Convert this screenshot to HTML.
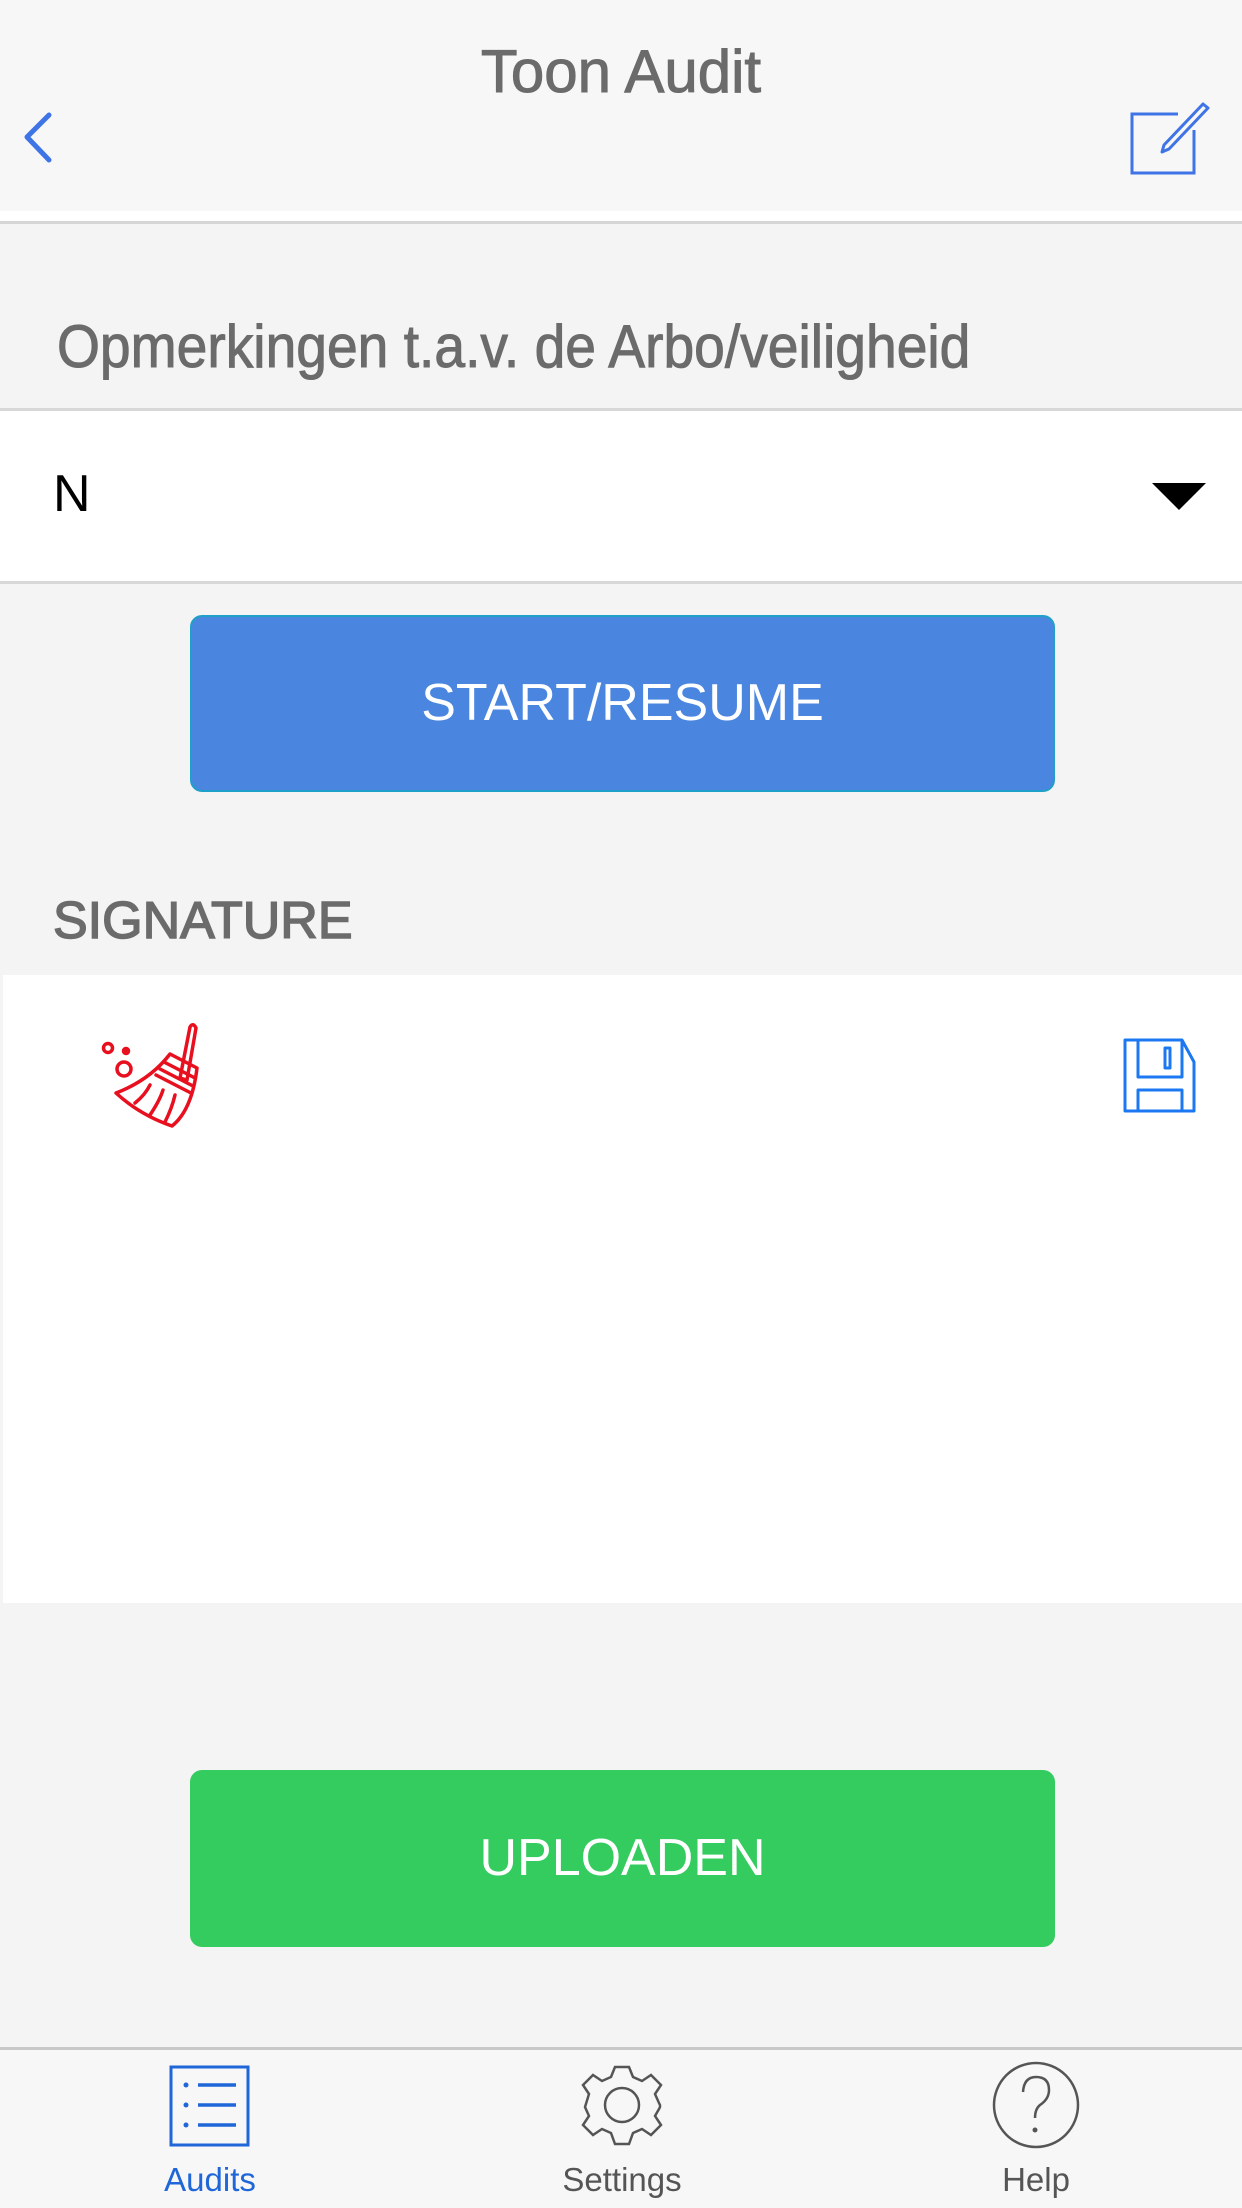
<!DOCTYPE html>
<html><head><meta charset="utf-8"><style>
*{margin:0;padding:0;box-sizing:border-box}
body{width:1242px;height:2208px;background:#f4f4f4;font-family:"Liberation Sans",sans-serif;position:relative;overflow:hidden}
.a{position:absolute}
</style></head><body>
<div class="a" style="left:0;top:0;width:1242px;height:211px;background:#f7f7f7"></div>
<div class="a" style="left:0;top:211px;width:1242px;height:10px;background:#fff"></div>
<div class="a" style="left:0;top:221px;width:1242px;height:3px;background:#d6d6d6"></div>
<div class="a" style="left:0;top:40px;width:1242px;text-align:center;font-size:60px;color:#6b6b6b;line-height:64px;-webkit-text-stroke:1px #6b6b6b">Toon Audit</div>
<svg class="a" style="left:0;top:0" width="1242" height="211">
<polyline points="49,115 27,137 49,160" fill="none" stroke="#3f74e6" stroke-width="5" stroke-linecap="round" stroke-linejoin="round"/>
<polyline points="1178,114 1132,114 1132,173 1194,173 1194,130" fill="none" stroke="#3f74e6" stroke-width="3"/>
<path d="M1203,104 L1164,145 L1162,152 L1169,149 L1208,108 Z" fill="none" stroke="#3f74e6" stroke-width="3" stroke-linejoin="round"/>
</svg>
<div class="a" style="left:57px;top:314px;font-size:60px;color:#6b6b6b;line-height:66px;transform:scaleX(0.92);transform-origin:0 0;white-space:nowrap;-webkit-text-stroke:1px #6b6b6b">Opmerkingen t.a.v. de Arbo/veiligheid</div>
<div class="a" style="left:0;top:408px;width:1242px;height:3px;background:#d8d8d8"></div>
<div class="a" style="left:0;top:411px;width:1242px;height:171px;background:#fff"></div>
<div class="a" style="left:0;top:581px;width:1242px;height:3px;background:#d8d8d8"></div>
<div class="a" style="left:53px;top:464px;font-size:52px;color:#000;line-height:60px">N</div>
<svg class="a" style="left:1150px;top:480px" width="60" height="32"><polygon points="2,3 56,3 29,30" fill="#000"/></svg>
<div class="a" style="left:190px;top:615px;width:865px;height:177px;background:#4a86e0;border:2px solid #1ea0c8;border-radius:12px;color:#fff;font-size:52px;text-align:center;line-height:173px">START/RESUME</div>
<div class="a" style="left:53px;top:891px;font-size:52px;color:#6b6b6b;line-height:60px;-webkit-text-stroke:1.5px #6b6b6b">SIGNATURE</div>
<div class="a" style="left:3px;top:975px;width:1239px;height:628px;background:#fff"></div>
<svg class="a" style="left:0;top:1000px" width="1242" height="140" fill="none">
<g stroke="#e8101e" stroke-width="3.5" stroke-linecap="round" stroke-linejoin="round">
<circle cx="108" cy="48" r="4.5"/><circle cx="126" cy="51" r="2.5" fill="#e8101e"/><circle cx="124" cy="69" r="7"/>
<path d="M196,28 L187,80 L180,78 L190,27 Q193,22 196,28 Z"/>
<path d="M170,54 L197,68 Q192,110 172,126 Q140,115 116,93 Q150,80 170,54 Z"/>
<path d="M164,62 L195,78 M160,69 L193,86 M156,75 L191,93"/>
<path d="M135,103 Q145,95 150,85 M150,115 Q160,100 163,90 M165,122 Q172,108 175,95"/>
</g>
<g stroke="#1b78f2" stroke-width="3" stroke-linejoin="round">
<path d="M1125,40 L1182,40 L1194,62 L1194,111 L1125,111 Z"/>
<path d="M1138,40 L1138,77 L1182,77 L1182,40"/>
<rect x="1165" y="48" width="5" height="20"/>
<path d="M1138,111 L1138,90 L1182,90 L1182,111"/>
</g>
</svg>
<div class="a" style="left:190px;top:1770px;width:865px;height:177px;background:#34cc5f;border-radius:12px;color:#fff;font-size:52px;text-align:center;line-height:177px">UPLOADEN</div>
<div class="a" style="left:0;top:2047px;width:1242px;height:3px;background:#c8c8c8"></div>
<div class="a" style="left:0;top:2050px;width:1242px;height:158px;background:#f7f7f7"></div>
<svg class="a" style="left:0;top:2050px" width="1242" height="158" fill="none">
<g stroke="#1f66d8" stroke-width="3">
<rect x="171" y="17" width="77" height="78"/>
<path d="M198,35 H236 M198,55 H236 M198,75 H236" stroke-width="3.5"/>
</g>
<g fill="#1f66d8"><circle cx="186" cy="35" r="2.5"/><circle cx="186" cy="55" r="2.5"/><circle cx="186" cy="75" r="2.5"/></g>
<g stroke="#555" stroke-width="2.5">
<path d="M615,17 L629,17 L633,27 L642,31 L651,25 L661,35 L655,44 L659,53 L660,55 L660,57 L659,59 L655,66 L661,75 L651,85 L642,79 L633,83 L629,94 L615,94 L611,83 L602,79 L593,85 L583,75 L589,66 L585,57 L589,44 L583,35 L593,25 L602,31 L611,27 Z"/>
<circle cx="622" cy="55" r="17"/>
<circle cx="1036" cy="55" r="42"/>
<path d="M1023,42 Q1024,27 1036,27 Q1049,27 1049,40 Q1049,49 1040,55 Q1035,59 1035,68"/>
</g>
<circle cx="1035" cy="80" r="2.5" fill="#555"/>
</svg>
<div class="a" style="left:110px;top:2160px;width:200px;text-align:center;font-size:33px;color:#1f66d8;line-height:40px">Audits</div>
<div class="a" style="left:522px;top:2160px;width:200px;text-align:center;font-size:33px;color:#555;line-height:40px">Settings</div>
<div class="a" style="left:936px;top:2160px;width:200px;text-align:center;font-size:33px;color:#555;line-height:40px">Help</div>
</body></html>
